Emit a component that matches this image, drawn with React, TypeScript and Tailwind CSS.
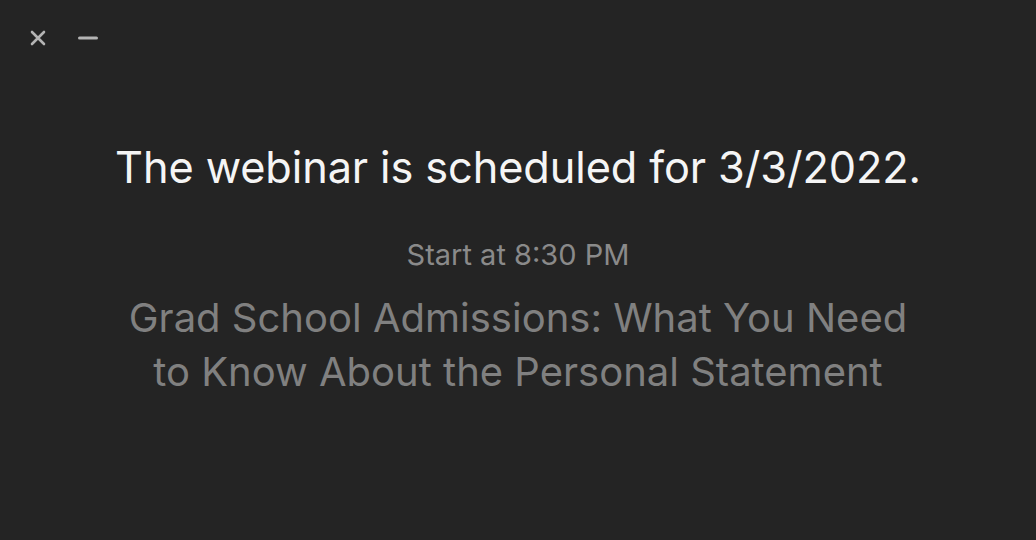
import React from "react";

const App = () => {
  return (
    <div
      className="w-[1036px] h-[540px] bg-[#242424] flex flex-col"
      style={{ fontFamily: "Inter, 'Noto Sans', sans-serif" }}
    >
      {/* window controls */}
      <div className="flex items-center gap-[32px] pl-[30px] pt-[30px] h-[46px]">
        <svg width="16" height="16" viewBox="0 0 16 16">
          <path d="M2 2 L14 14 M14 2 L2 14" stroke="#b4b4b4" strokeWidth="2.6" strokeLinecap="round" />
        </svg>
        <svg width="20" height="4" viewBox="0 0 20 4">
          <path d="M1.5 2 H18.5" stroke="#b4b4b4" strokeWidth="3" strokeLinecap="round" />
        </svg>
      </div>

      <div className="flex flex-col items-center text-center">
        <h1 className="mt-[96px] text-[43.3px] leading-[50px] text-[#f5f5f5] font-normal tracking-[-0.1px]">
          The webinar is scheduled for 3/3/2022.
        </h1>
        <p className="mt-[47px] text-[29px] leading-[32px] text-[#8a8a8a]">Start at 8:30 PM</p>
        <p className="mt-[20px] w-[820px] text-[40px] leading-[54px] text-[#808080]">
          Grad School Admissions: What You Need to Know About the Personal Statement
        </p>
      </div>
    </div>
  );
};

export default App;
